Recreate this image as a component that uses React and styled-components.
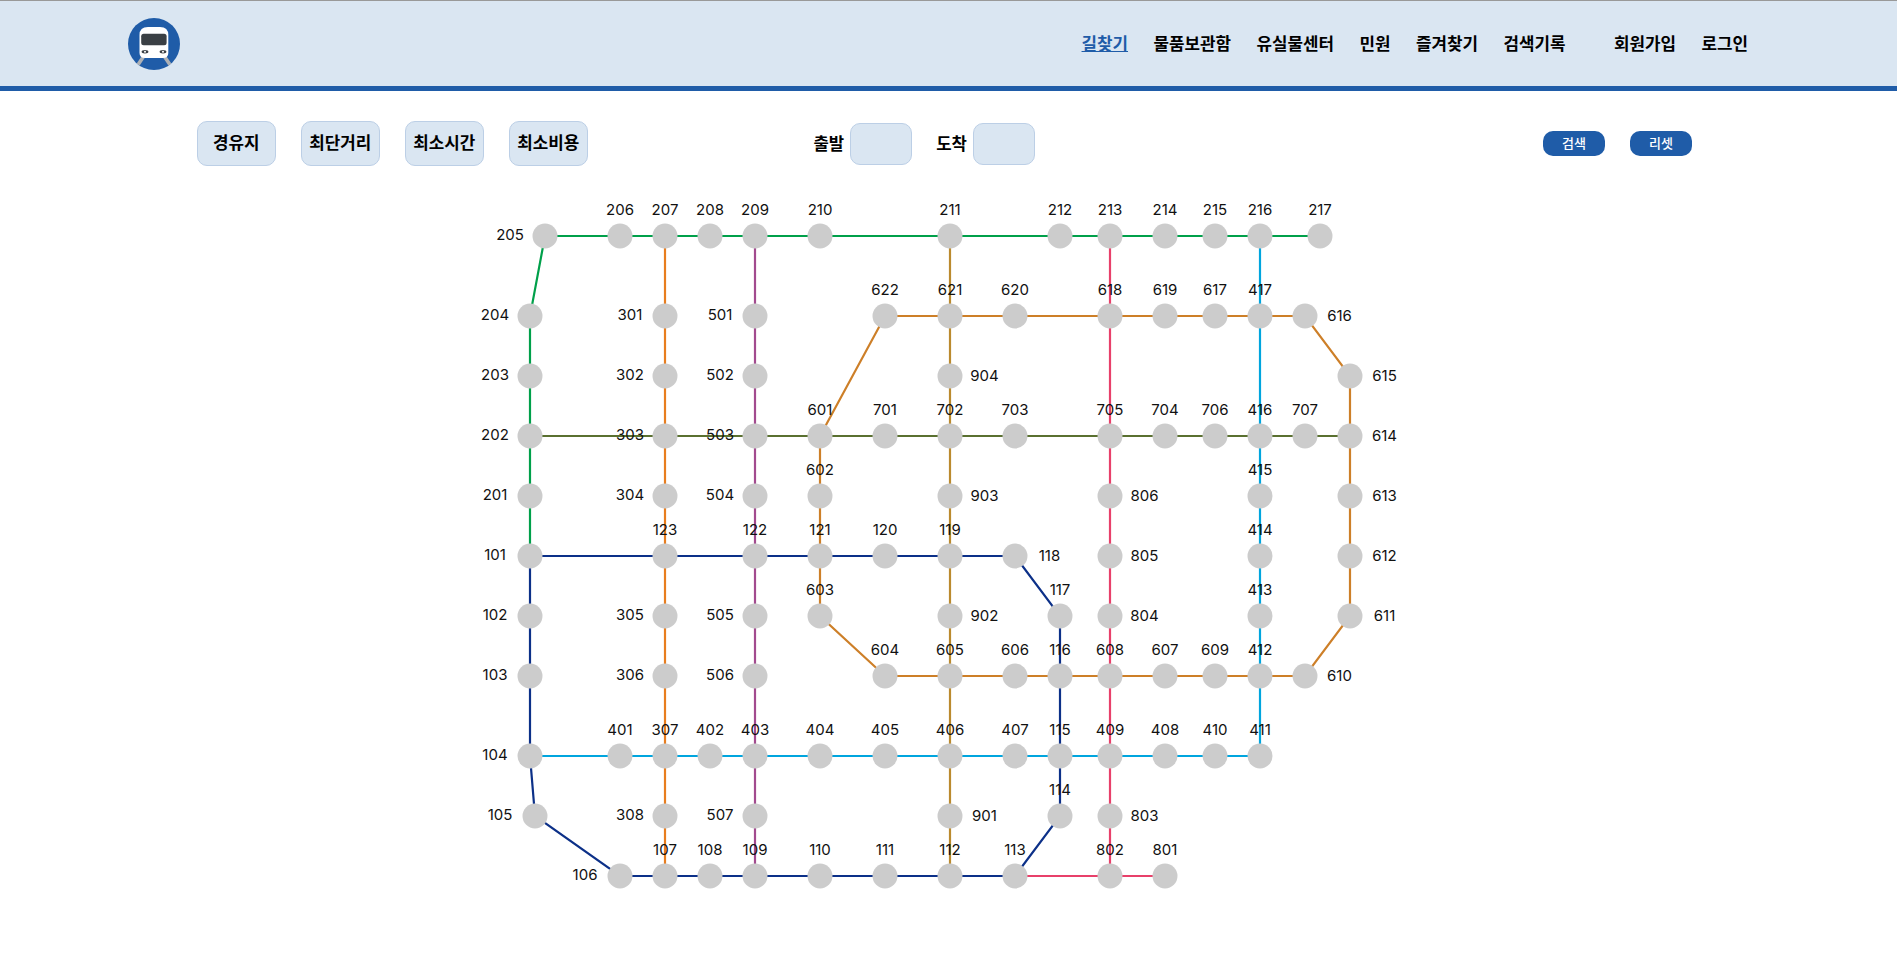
import React from 'react';
import styled, { createGlobalStyle } from 'styled-components';

const GlobalStyle = createGlobalStyle`
  html, body {
    margin: 0;
    padding: 0;
    background: #fff;
    font-family: "Inter", "Noto Sans CJK KR", sans-serif;
  }
`;

const KR = '"Noto Sans CJK KR", "Noto Sans", sans-serif';
const BLUE = '#1f5ca8';
const PALE = '#dae6f2';

const Header = styled.header`
  display: flex;
  align-items: center;
  box-sizing: border-box;
  height: 91px;
  padding: 0 149px 0 127.5px;
  background: ${PALE};
  border-top: 1px solid #999;
  border-bottom: 5px solid ${BLUE};
`;

const Logo = styled.svg`
  display: block;
  width: 52px;
  height: 52px;
`;

const Nav = styled.nav`
  display: flex;
  align-items: center;
  margin-left: auto;
  padding-bottom: 2px;
  gap: 25.5px;
`;

const NavLink = styled.a`
  font-family: ${KR};
  font-size: 16.85px;
  font-weight: 700;
  line-height: 20px;
  color: ${(p) => (p.$active ? BLUE : '#000')};
  text-decoration: ${(p) => (p.$active ? 'underline' : 'none')};
  margin-left: ${(p) => (p.$spaced ? '23px' : '0')};
  cursor: pointer;
`;

const Toolbar = styled.div`
  display: flex;
  align-items: center;
  height: 45px;
  margin-top: 30px;
  padding-left: 197px;
`;

const Options = styled.div`
  display: flex;
  gap: 25.5px;
`;

const OptionButton = styled.button`
  box-sizing: border-box;
  width: 78.5px;
  height: 45px;
  padding: 0 0 4px;
  background: ${PALE};
  border: 1px solid #bccfe6;
  border-radius: 10px;
  font-family: ${KR};
  font-size: 16.85px;
  font-weight: 700;
  color: #000;
`;

const Stations = styled.div`
  display: flex;
  align-items: center;
  margin-left: 226px;
  gap: 24px;
`;

const StationField = styled.label`
  display: flex;
  align-items: center;
  gap: 6px;
  font-family: ${KR};
  font-size: 16.7px;
  font-weight: 700;
`;

const StationLabel = styled.span`
  padding-bottom: 2px;
`;

const StationInput = styled.div`
  box-sizing: border-box;
  width: 62px;
  height: 42px;
  background: ${PALE};
  border: 1px solid #bccfe6;
  border-radius: 10px;
`;

const Actions = styled.div`
  display: flex;
  gap: 25px;
  margin-left: auto;
  margin-right: 205px;
`;

const ActionButton = styled.button`
  width: 62px;
  height: 25px;
  padding: 0 0 2px;
  background: ${BLUE};
  border: 0;
  border-radius: 10px;
  font-family: ${KR};
  font-size: 13px;
  font-weight: 500;
  color: #fff;
`;

const Map = styled.svg`
  display: block;
  width: 1897px;
  height: 720px;
  margin-top: 25px;
`;

const StationDot = styled.circle`
  fill: #ccc;
`;

const StationName = styled.text`
  font-family: "Inter", sans-serif;
  font-size: 15px;
  fill: #111;
  text-anchor: middle;
  dominant-baseline: central;
`;

// station: [x, y, label side]
const S = {
  101: [530, 556, 'l'], 102: [530, 616, 'l'], 103: [530, 676, 'l'], 104: [530, 756, 'l'],
  105: [535, 816, 'l'], 106: [620, 876, 'l'], 107: [665, 876], 108: [710, 876], 109: [755, 876],
  110: [820, 876], 111: [885, 876], 112: [950, 876], 113: [1015, 876], 114: [1060, 816],
  115: [1060, 756], 116: [1060, 676], 117: [1060, 616], 118: [1015, 556, 'r'], 119: [950, 556],
  120: [885, 556], 121: [820, 556], 122: [755, 556], 123: [665, 556],
  201: [530, 496, 'l'], 202: [530, 436, 'l'], 203: [530, 376, 'l'], 204: [530, 316, 'l'],
  205: [545, 236, 'l'], 206: [620, 236], 207: [665, 236], 208: [710, 236], 209: [755, 236],
  210: [820, 236], 211: [950, 236], 212: [1060, 236], 213: [1110, 236], 214: [1165, 236],
  215: [1215, 236], 216: [1260, 236], 217: [1320, 236],
  301: [665, 316, 'l'], 302: [665, 376, 'l'], 303: [665, 436, 'l'], 304: [665, 496, 'l'],
  305: [665, 616, 'l'], 306: [665, 676, 'l'], 307: [665, 756], 308: [665, 816, 'l'],
  401: [620, 756], 402: [710, 756], 403: [755, 756], 404: [820, 756], 405: [885, 756],
  406: [950, 756], 407: [1015, 756], 408: [1165, 756], 409: [1110, 756], 410: [1215, 756],
  411: [1260, 756], 412: [1260, 676], 413: [1260, 616], 414: [1260, 556], 415: [1260, 496],
  416: [1260, 436], 417: [1260, 316],
  501: [755, 316, 'l'], 502: [755, 376, 'l'], 503: [755, 436, 'l'], 504: [755, 496, 'l'],
  505: [755, 616, 'l'], 506: [755, 676, 'l'], 507: [755, 816, 'l'],
  601: [820, 436], 602: [820, 496], 603: [820, 616], 604: [885, 676], 605: [950, 676],
  606: [1015, 676], 607: [1165, 676], 608: [1110, 676], 609: [1215, 676], 610: [1305, 676, 'r'],
  611: [1350, 616, 'r'], 612: [1350, 556, 'r'], 613: [1350, 496, 'r'], 614: [1350, 436, 'r'],
  615: [1350, 376, 'r'], 616: [1305, 316, 'r'], 617: [1215, 316], 618: [1110, 316], 619: [1165, 316],
  620: [1015, 316], 621: [950, 316], 622: [885, 316],
  701: [885, 436], 702: [950, 436], 703: [1015, 436], 704: [1165, 436], 705: [1110, 436],
  706: [1215, 436], 707: [1305, 436],
  801: [1165, 876], 802: [1110, 876], 803: [1110, 816, 'r'], 804: [1110, 616, 'r'],
  805: [1110, 556, 'r'], 806: [1110, 496, 'r'],
  901: [950, 816, 'r'], 902: [950, 616, 'r'], 903: [950, 496, 'r'], 904: [950, 376, 'r'],
};

const LINES = [
  { color: '#0c3088', stops: [101, 102, 103, 104, 105, 106, 107, 108, 109, 110, 111, 112, 113, 114, 115, 116, 117, 118, 119, 120, 121, 122, 123, 101] },
  { color: '#00a04a', stops: [101, 201, 202, 203, 204, 205, 206, 207, 208, 209, 210, 211, 212, 213, 214, 215, 216, 217] },
  { color: '#e87d1e', stops: [207, 301, 302, 303, 304, 123, 305, 306, 307, 308, 107] },
  { color: '#00a5de', stops: [216, 417, 416, 415, 414, 413, 412, 411] },
  { color: '#00a5de', stops: [104, 401, 307, 402, 403, 404, 405, 406, 407, 115, 409, 408, 410, 411] },
  { color: '#a24a8e', stops: [209, 501, 502, 503, 504, 122, 505, 506, 403, 507, 109] },
  { color: '#cd7f28', stops: [601, 602, 121, 603, 604, 605, 606, 116, 608, 607, 609, 412, 610, 611, 612, 613, 614, 615, 616, 417, 617, 619, 618, 620, 621, 622, 601] },
  { color: '#5a7030', stops: [202, 303, 503, 601, 701, 702, 703, 705, 704, 706, 416, 707, 614] },
  { color: '#e8406a', stops: [213, 618, 705, 806, 805, 804, 608, 409, 803, 802, 801] },
  { color: '#e8406a', stops: [113, 802] },
  { color: '#bb8a2e', stops: [211, 621, 904, 702, 903, 119, 902, 605, 406, 901, 112] },
];

const labelPos = ([x, y, side]) => {
  if (side === 'l') return [x - 35, y - 2];
  if (side === 'r') return [x + 34.5, y - 1];
  return [x, y - 27];
};

const NAV = ['길찾기', '물품보관함', '유실물센터', '민원', '즐겨찾기', '검색기록', '회원가입', '로그인'];
const OPTIONS = ['경유지', '최단거리', '최소시간', '최소비용'];

const SubwayLogo = () => (
  <Logo viewBox="0 0 52 52">
    <defs>
      <clipPath id="logo-clip"><circle cx="26" cy="26" r="26" /></clipPath>
    </defs>
    <circle cx="26" cy="26" r="26" fill={BLUE} />
    <g clipPath="url(#logo-clip)">
      <path d="M15.2 39 L8.5 49" stroke="#aeb1b5" strokeWidth="3.6" />
      <path d="M36.8 39 L43.5 49" stroke="#aeb1b5" strokeWidth="3.6" />
    </g>
    <path d="M11.5 17 Q11.5 9 20 9 L32 9 Q40.3 9 40.3 17 L40.3 35 Q40.3 40 35 40 L17 40 Q11.5 40 11.5 35 Z" fill="#fff" />
    <rect x="13.2" y="15.7" width="25.4" height="11.6" rx="2.5" fill="#3a3f44" />
    <ellipse cx="17" cy="33.7" rx="3.4" ry="1.7" fill="#3a3f44" />
    <ellipse cx="35" cy="33.7" rx="3.4" ry="1.7" fill="#3a3f44" />
    <circle cx="17" cy="33.7" r="1" fill="#fff" />
    <circle cx="35" cy="33.7" r="1" fill="#fff" />
  </Logo>
);

const SubwayMap = () => (
  <Map viewBox="0 191 1897 720">
    {LINES.map((line, i) => (
      <polyline
        key={i}
        points={line.stops.map((id) => `${S[id][0]},${S[id][1]}`).join(' ')}
        fill="none"
        stroke={line.color}
        strokeWidth="2.2"
      />
    ))}
    {Object.entries(S).map(([id, st]) => {
      const [lx, ly] = labelPos(st);
      return (
        <g key={id}>
          <StationDot cx={st[0]} cy={st[1]} r="12.5" />
          <StationName x={lx} y={ly}>{id}</StationName>
        </g>
      );
    })}
  </Map>
);

export default function App() {
  return (
    <>
      <GlobalStyle />
      <Header>
        <SubwayLogo />
        <Nav>
          {NAV.map((name, i) => (
            <NavLink key={name} $active={i === 0} $spaced={i === 6}>{name}</NavLink>
          ))}
        </Nav>
      </Header>
      <Toolbar>
        <Options>
          {OPTIONS.map((name) => <OptionButton key={name}>{name}</OptionButton>)}
        </Options>
        <Stations>
          <StationField><StationLabel>출발</StationLabel><StationInput /></StationField>
          <StationField><StationLabel>도착</StationLabel><StationInput /></StationField>
        </Stations>
        <Actions>
          <ActionButton>검색</ActionButton>
          <ActionButton>리셋</ActionButton>
        </Actions>
      </Toolbar>
      <SubwayMap />
    </>
  );
}
